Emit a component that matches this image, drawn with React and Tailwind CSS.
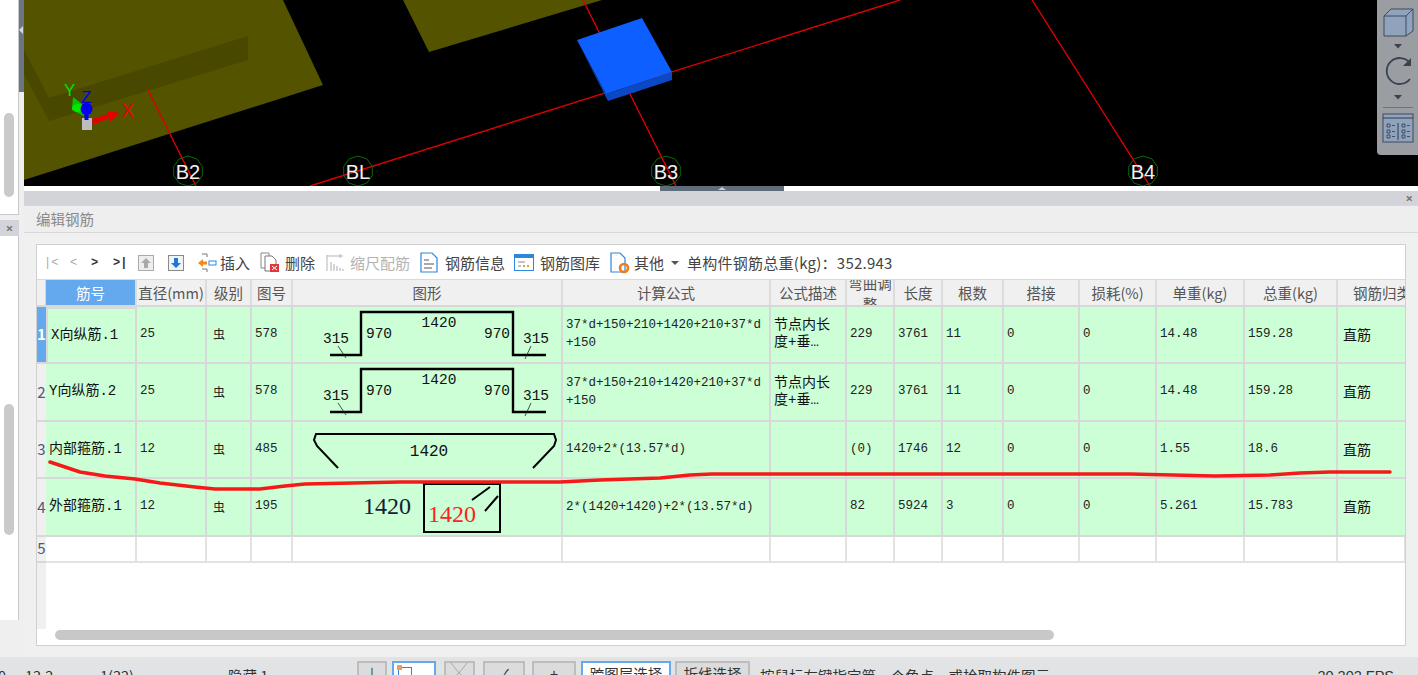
import React from 'react';

const cjk = { fontFamily: '"Noto Sans CJK SC", sans-serif' };
const GRID = 'grid grid-cols-[9px_91px_70px_45px_41px_270px_208px_76px_48px_48px_61px_76px_77px_88px_93px_68px]';

const headers = ['筋号', '直径(mm)', '级别', '图号', '图形', '计算公式', '公式描述', '弯曲调整', '长度', '根数', '搭接', '损耗(%)', '单重(kg)', '总重(kg)', '钢筋归类'];

const rows = [
  { no: 1, name: 'X向纵筋.1', d: 25, fig: 578, shape: 'hat', formula: '37*d+150+210+1420+210+37*d\n+150', desc: '节点内长\n度+垂…', bend: '229', len: 3761, count: 11, unit: '14.48', total: '159.28' },
  { no: 2, name: 'Y向纵筋.2', d: 25, fig: 578, shape: 'hat', formula: '37*d+150+210+1420+210+37*d\n+150', desc: '节点内长\n度+垂…', bend: '229', len: 3761, count: 11, unit: '14.48', total: '159.28' },
  { no: 3, name: '内部箍筋.1', d: 12, fig: 485, shape: 'tie', formula: '1420+2*(13.57*d)', desc: '', bend: '(0)', len: 1746, count: 12, unit: '1.55', total: '18.6' },
  { no: 4, name: '外部箍筋.1', d: 12, fig: 195, shape: 'stirrup', formula: '2*(1420+1420)+2*(13.57*d)', desc: '', bend: '82', len: 5924, count: 3, unit: '5.261', total: '15.783' },
];

const Axis = ({ x, label }) => {
  const pts = Array.from({ length: 10 }, (_, i) => {
    const a = (i / 10) * Math.PI * 2;
    return `${x + 15 * Math.sin(a)},${171 + 15 * Math.cos(a)}`;
  }).join(' ');
  return (
    <g>
      <polygon points={pts} fill="none" stroke="#0b6b0b" strokeWidth="1" />
      <text x={x} y="178.5" textAnchor="middle" fill="#f2f2f2" fontSize="20" fontFamily="Liberation Sans, sans-serif">{label}</text>
    </g>
  );
};

const Viewport = () => (
  <svg className="block h-[186px] w-full" viewBox="24 0 1394 186">
    <rect x="24" y="0" width="1394" height="186" fill="#000" />
    <polygon points="24,0 283,0 323,85 24,180" fill="#535300" />
    <polygon points="403,0 602,0 429,52" fill="#535300" />
    <polygon points="24,50 49,98 248,36 248,60 49,121 24,74" fill="#484800" />
    <line x1="148" y1="90" x2="196" y2="186" stroke="#e00000" strokeWidth="1.4" />
    <line x1="310" y1="186" x2="900" y2="0" stroke="#e00000" strokeWidth="1.4" />
    <line x1="583" y1="0" x2="676" y2="186" stroke="#e00000" strokeWidth="1.4" />
    <line x1="1032" y1="0" x2="1150" y2="186" stroke="#e00000" strokeWidth="1.4" />
    <polygon points="577,40 642,18 672,72 606,94" fill="#0d5fff" />
    <polygon points="577,40 606,94 672,72 672,80 608,101" fill="#0a48c4" />
    <Axis x={188} label="B2" />
    <Axis x={358} label="BL" />
    <Axis x={666} label="B3" />
    <Axis x={1143} label="B4" />
    {/* axis gizmo */}
    <rect x="82" y="118" width="10" height="12" fill="#bdbdbd" />
    <polygon points="92,119 108,114 107,111 120,113 110,122 109,118 93,125" fill="#e80000" />
    <polygon points="73,97 82,104 84,116 72,110" fill="#00c800" />
    <ellipse cx="78" cy="108" rx="6" ry="4" fill="#00e800" />
    <rect x="84.5" y="106" width="4" height="14" fill="#0000f0" />
    <circle cx="86.5" cy="109" r="6" fill="#0000f0" />
    <text x="64" y="96" fill="#00e000" fontSize="17" fontFamily="Liberation Sans, sans-serif">Y</text>
    <text x="81" y="103" fill="#0000f0" fontSize="17" fontFamily="Liberation Sans, sans-serif">Z</text>
    <text x="122" y="117" fill="#f00000" fontSize="18" fontFamily="Liberation Sans, sans-serif">X</text>
  </svg>
);

const ViewTools = () => (
  <div className="absolute right-0 top-0 flex h-[155px] w-[41px] flex-col items-center rounded-bl-sm bg-[#9a9da2]">
    <svg width="32" height="32" viewBox="0 0 32 32" className="mt-[7px]">
      <path d="M2 9 L9 2 H31 V24 L24 29 H2 Z" fill="#8fa3bd" stroke="#3f4a5c" strokeWidth="1" />
      <path d="M2 9 H24 V29 M24 9 L31 2" fill="none" stroke="#3f4a5c" strokeWidth="1" />
    </svg>
    <svg width="10" height="5" viewBox="0 0 10 5" className="mt-[5px]"><path d="M1 0 H9 L5 4.5 Z" fill="#39424f" /></svg>
    <svg width="32" height="32" viewBox="0 0 32 32" className="mt-[6px]">
      <path d="M28 8 A13 13 0 1 0 28 24" fill="none" stroke="#39424f" strokeWidth="1.8" />
      <path d="M29 3 V11 H21 Z" fill="#39424f" />
    </svg>
    <svg width="10" height="5" viewBox="0 0 10 5" className="mt-[8px]"><path d="M1 0 H9 L5 4.5 Z" fill="#39424f" /></svg>
    <div className="mt-[7px] h-px w-[30px] bg-[#6d7278]" />
    <svg width="32" height="30" viewBox="0 0 32 30" className="mt-[5px]">
      <rect x="1" y="1" width="30" height="28" fill="#8fa3bd" stroke="#3f4a5c" />
      <path d="M1 5 H31 M16 10 V27" stroke="#2f3a4c" strokeWidth="1" />
      <path d="M5 11 h3 v3 h-3 z M5 17 h3 v3 h-3 z M5 22 h3 v3 h-3 z M20 11 h3 v3 h-3 z M20 17 h3 v3 h-3 z M20 22 h3 v3 h-3 z M10 12.5 h3 M10 18.5 h3 M10 23.5 h3 M25 12.5 h3 M25 18.5 h3 M25 23.5 h3" fill="none" stroke="#2f3a4c" strokeWidth="0.8" />
    </svg>
  </div>
);

const ToolText = ({ children, muted, className = '' }) => (
  <span className={`text-[15px] leading-none ${muted ? 'text-[#b4b4b4]' : 'text-[#444]'} ${className}`}>{children}</span>
);

const Toolbar = () => (
  <div className="flex h-[35px] items-center border-b border-[#d9d9d9] pl-[7px] pt-[1px]" style={cjk}>
    <span className="w-[26px] font-mono text-[12px] text-[#aaa]">|&lt;</span>
    <span className="w-[21px] font-mono text-[12px] text-[#aaa]">&lt;</span>
    <span className="w-[22px] font-mono text-[12px] font-semibold text-[#333]">&gt;</span>
    <span className="w-[25px] font-mono text-[12px] font-semibold text-[#333]">&gt;|</span>
    <svg width="16" height="18" viewBox="0 0 16 18" className="mr-[14px]">
      <rect x="0.5" y="1.5" width="15" height="15" fill="#eee" stroke="#aaa" />
      <path d="M8 4 L13 9 H10 V14 H6 V9 H3 Z" fill="#a9a9a9" />
    </svg>
    <svg width="16" height="18" viewBox="0 0 16 18" className="mr-[13px]">
      <rect x="0.5" y="1.5" width="15" height="15" fill="#eef3fa" stroke="#8a8a8a" />
      <path d="M8 14 L13 9 H10 V4 H6 V9 H3 Z" fill="#1f78d8" />
    </svg>
    <svg width="20" height="20" viewBox="0 0 20 20" className="mr-[3px]">
      <path d="M5 1 H10 V4 M5 16 H10 V19" fill="none" stroke="#777" />
      <path d="M1 10 L6 6 V8.5 H10 V11.5 H6 V14 Z" fill="#f08a1d" />
      <rect x="12" y="8" width="7" height="4" fill="#fff" stroke="#2f86de" />
    </svg>
    <ToolText className="mr-[10px]">插入</ToolText>
    <svg width="20" height="21" viewBox="0 0 20 21" className="mr-[5px]">
      <path d="M1 1 H9 V16 H1 Z" fill="#fff" stroke="#888" />
      <path d="M5 4 H12 L16 8 V19 H5 Z" fill="#fff" stroke="#777" />
      <rect x="10" y="12" width="9" height="8" fill="#e0353a" />
      <path d="M12 14 L17 18 M17 14 L12 18" stroke="#fff" />
    </svg>
    <ToolText className="mr-[11px]">删除</ToolText>
    <svg width="18" height="20" viewBox="0 0 18 20" className="mr-[6px]">
      <path d="M1 2 V18 M1 3 H17 M14 1 V5" fill="none" stroke="#b5b5b5" />
      <path d="M5 18 V9 M8 18 V11 M11 18 V13 M14 18 V15 M17 18 V16" stroke="#bbb" strokeWidth="1.2" />
    </svg>
    <ToolText muted className="mr-[10px]">缩尺配筋</ToolText>
    <svg width="18" height="21" viewBox="0 0 18 21" className="mr-[7px]">
      <path d="M1 1 H12 L17 6 V20 H1 Z" fill="#fff" stroke="#2f86de" strokeWidth="1.2" />
      <path d="M4 8 H9 M4 12 H14 M4 16 H12" stroke="#555" />
    </svg>
    <ToolText className="mr-[9px]">钢筋信息</ToolText>
    <svg width="20" height="17" viewBox="0 0 20 17" className="mr-[6px]">
      <rect x="0.5" y="0.5" width="19" height="16" fill="#fff" stroke="#2f86de" />
      <rect x="0.5" y="0.5" width="19" height="3.5" fill="#2f86de" />
      <path d="M4 8 H11 M4 12 H7" stroke="#888" />
      <path d="M9 12 h2 M13 12 h2" stroke="#e0a020" strokeWidth="2" />
    </svg>
    <ToolText className="mr-[10px]">钢筋图库</ToolText>
    <svg width="20" height="22" viewBox="0 0 20 22" className="mr-[4px]">
      <path d="M1 1 H10 L15 6 V20 H1 Z" fill="#fff" stroke="#2f86de" strokeWidth="1.2" />
      <circle cx="14" cy="16" r="4" fill="none" stroke="#f07a14" strokeWidth="2.6" />
    </svg>
    <ToolText>其他</ToolText>
    <svg width="8" height="4" viewBox="0 0 8 4" className="ml-[7px] mr-[8px]"><path d="M0 0 H8 L4 4 Z" fill="#555" /></svg>
    <ToolText className="tracking-[0.25px]">单构件钢筋总重(kg)：352.943</ToolText>
  </div>
);

const labelProps = { fill: '#111', fontFamily: 'Liberation Mono, monospace', textAnchor: 'middle' };

const HatShape = () => (
  <svg width="270" height="55" className="-ml-px block shrink-0">
    <polyline points="38,48 69,48 69,5 221,5 221,48 254,48" fill="none" stroke="#000" strokeWidth="2.4" />
    <path d="M46 39 L54 51 M239 39 L233 52" stroke="#222" strokeWidth="0.8" />
    <text x="44" y="36" fontSize="14.5" {...labelProps}>315</text>
    <text x="87" y="31" fontSize="14.5" {...labelProps}>970</text>
    <text x="147" y="20" fontSize="14.5" {...labelProps}>1420</text>
    <text x="205" y="31" fontSize="14.5" {...labelProps}>970</text>
    <text x="244" y="36" fontSize="14.5" {...labelProps}>315</text>
  </svg>
);

const TieShape = () => (
  <svg width="270" height="55" className="-ml-px block shrink-0">
    <path d="M46 46 L25 24 L22 18 L24 12 H262 L264 18 L262 24 L241 46" fill="none" stroke="#000" strokeWidth="2" />
    <text x="137" y="34" fontSize="16" {...labelProps}>1420</text>
  </svg>
);

const StirrupShape = () => (
  <svg width="270" height="55" className="-ml-px block shrink-0">
    <rect x="132" y="5" width="76" height="48" fill="none" stroke="#000" strokeWidth="2" />
    <path d="M180 21 L198 8 M193 32 L206 17" stroke="#000" strokeWidth="2" />
    <text x="95" y="35" fontSize="24" fill="#123" textAnchor="middle" fontFamily="Liberation Serif, serif">1420</text>
    <text x="160" y="43" fontSize="24" fill="#f22" textAnchor="middle" fontFamily="Liberation Serif, serif">1420</text>
  </svg>
);

const shapes = { hat: HatShape, tie: TieShape, stirrup: StirrupShape };

const cellBase = 'flex items-center overflow-hidden border-b-2 border-r-2 border-[#d8d8d8] bg-[#ccffd6]';
const cell = `${cellBase} pl-[3px]`;
const mono = { fontFamily: '"Liberation Mono", "Noto Sans CJK SC", monospace' };

const Row = ({ row }) => {
  const Shape = shapes[row.shape];
  const first = row.no === 1;
  const plain = [row.len, row.count, 0, 0, row.unit, row.total];
  return (
    <div className={`${GRID} h-[57.5px] text-[12.5px] text-[#222]`} style={mono}>
      <div className={`flex items-center justify-center border-b-2 border-[#d8d8d8] text-[15px] ${first ? 'bg-[#64a8ee] font-bold text-white' : 'bg-[#f0f0f0] text-[#4a5a78]'}`} style={cjk}>{row.no}</div>
      <div className={`${cell} text-[14px] text-[#111] ${first ? 'border-2 border-[#6aaaf0]' : ''}`}>{row.name}</div>
      <div className={cell}>{row.d}</div>
      <div className={`${cellBase} pl-[6px] text-[12px]`} style={cjk}>虫</div>
      <div className={cell}>{row.fig}</div>
      <div className={cellBase}><Shape /></div>
      <div className={`${cell} whitespace-pre leading-[18px]`}>{row.formula}</div>
      <div className={`${cell} whitespace-pre text-[14px] leading-[17px] text-[#111]`}>{row.desc}</div>
      <div className={cell}>{row.bend}</div>
      {plain.map((v, i) => (
        <div key={i} className={cell}>{v}</div>
      ))}
      <div className="flex items-center border-b-2 border-[#d8d8d8] bg-[#ccffd6] pl-[5px] text-[14px] text-[#111]" style={cjk}>直筋</div>
    </div>
  );
};

const HeaderCell = ({ label, index }) => {
  if (label === '弯曲调整') {
    // wraps in the narrow column and gets clipped top and bottom
    return (
      <div className="overflow-hidden border-r-2 border-[#dcdcdc] text-center">
        <div className="-mt-[8px] leading-[21px]">{label}</div>
      </div>
    );
  }
  if (index === 14) {
    return <div className="overflow-hidden whitespace-nowrap pl-[15px] pt-[3px]">{label}</div>;
  }
  return (
    <div className={`overflow-hidden whitespace-nowrap border-r-2 border-[#dcdcdc] pt-[3px] text-center ${index === 0 ? 'bg-[#64a8ee] text-white' : ''}`}>
      {label}
    </div>
  );
};

const RebarTable = () => (
  <div>
    <div className={`${GRID} h-[26.5px] border-b-2 border-[#d8d8d8] bg-[#f0f0f0] text-[14.5px] leading-[20px] text-[#555]`} style={cjk}>
      <div className="border-r border-[#d8d8d8]" />
      {headers.map((h, i) => <HeaderCell key={h} label={h} index={i} />)}
    </div>
    {rows.map((row) => <Row key={row.no} row={row} />)}
    <div className={`${GRID} h-[26px] text-[15px]`}>
      <div className="flex items-center justify-center border-b-2 border-[#d8d8d8] bg-[#f0f0f0] text-[#4a5a78]" style={cjk}>5</div>
      {headers.map((h) => <div key={h} className="border-b-2 border-r-2 border-[#e2e2e2]" />)}
    </div>
  </div>
);

const Sidebar = () => (
  <div className="relative flex w-[24px] shrink-0 flex-col bg-[#efefef]">
    {/* collapse strip next to the viewport */}
    <div className="absolute right-0 top-0 flex h-[92px] w-[5px] items-start bg-[#6b7585] pt-[26px]">
      <span className="h-0 w-0 border-y-[4px] border-r-[4px] border-y-transparent border-r-[#d5d8dc]" />
    </div>
    <div className="flex h-[215px] w-[19px] justify-center border-b border-r border-[#c8c8c8] bg-white pt-[113px]">
      <div className="h-[84px] w-[10px] rounded-md bg-[#cacaca]" />
    </div>
    <div className="mt-[5px] flex h-[16px] w-[19px] items-center justify-center bg-[#d2d4d9] text-[13px] font-bold leading-none text-[#777]">×</div>
    <div className="flex h-[384px] w-[19px] justify-center border-r border-[#c8c8c8] bg-white pt-[168px]">
      <div className="h-[131px] w-[10px] rounded-md bg-[#cacaca]" />
    </div>
  </div>
);

const StatusButton = ({ children, active, className = '' }) => (
  <div className={`mt-[4px] h-[24px] shrink-0 border-2 text-center text-[14.5px] leading-[22px] text-[#333] ${active ? 'border-[#64a8ee] bg-white' : 'border-[#bdbdbd] bg-[#dcdcdc]'} ${className}`}>{children}</div>
);

const StatusBar = () => (
  <div className="flex h-[18px] shrink-0 items-start overflow-hidden bg-[#e2e3e5] text-[14.5px] text-[#333]" style={cjk}>
    <span className="ml-[-2px] mt-[9px] w-[27px] leading-[20px]">0</span>
    <span className="mt-[9px] w-[75px] leading-[20px]">13.2</span>
    <span className="mt-[9px] w-[128px] leading-[20px]">1(32)</span>
    <span className="mt-[9px] w-[129px] leading-[20px]">隐藏 1</span>
    <StatusButton className="w-[30px]">|</StatusButton>
    <StatusButton active className="relative ml-[5px] w-[44px]">
      <span className="absolute left-[4px] top-[4px] block h-[10px] w-[14px] border border-[#2f86de] bg-white" />
      <span className="absolute left-[3px] top-[2px] block h-[5px] w-[5px] bg-[#f59a4a]" />
    </StatusButton>
    <StatusButton className="ml-[8px] w-[31px]">
      <svg width="27" height="14" viewBox="0 0 27 14" className="block"><path d="M5 0 L13 10 L21 0 M13 10 L8 14 M13 10 L18 14" fill="none" stroke="#a8a8a8" /></svg>
    </StatusButton>
    <StatusButton className="ml-[8px] w-[42px]">✓</StatusButton>
    <StatusButton className="ml-[7px] w-[44px]">+</StatusButton>
    <StatusButton active className="ml-[5px] w-[90px]">跨图层选择</StatusButton>
    <StatusButton className="ml-[4px] w-[75px]">折线选择</StatusButton>
    <span className="ml-[10px] mt-[9px] leading-[20px]">按鼠标左键指定第一个角点，或拾取构件图元</span>
    <span className="ml-auto mr-[24px] mt-[9px] leading-[20px]" style={{ fontFamily: 'Liberation Sans, sans-serif' }}>20.202 FPS</span>
  </div>
);

export default function App() {
  return (
    <div className="relative flex h-[675px] w-[1418px] flex-col overflow-hidden bg-[#f0f0f0]">
      <div className="flex h-[657px] shrink-0">
        <Sidebar />
        <div className="flex min-w-0 flex-1 flex-col">
          <div className="relative">
            <Viewport />
            <ViewTools />
          </div>
          {/* splitter */}
          <div className="relative h-[5px] bg-white">
            <div className="absolute left-[636px] top-0 flex h-[5px] w-[124px] justify-center bg-[#616c7a]">
              <span className="mt-[1px] h-0 w-0 border-x-[4px] border-b-[3px] border-x-transparent border-b-[#c8ccd2]" />
            </div>
          </div>
          <div className="flex h-[14px] items-center justify-end bg-[#d2d4d9] pr-[5px] text-[13px] font-bold leading-none text-[#777]">×</div>
          <div className="flex h-[28px] items-center border-y border-[#d8d8d8] bg-[#eeeeee] pl-[12px] text-[14.5px] text-[#8a8a8a]" style={cjk}>编辑钢筋</div>
          <div className="flex-1 px-[12px] pb-[11px] pt-[11px]">
            <div className="relative h-[402px] overflow-hidden border border-[#d0d0d0] bg-white">
              <Toolbar />
              <RebarTable />
              <div className="absolute bottom-[16px] left-0 top-[318px] w-[9px] bg-[#f0f0f0]" />
              <div className="absolute bottom-[5px] left-[18px] h-[10px] w-[999px] rounded-md bg-[#c8c8c8]" />
            </div>
          </div>
        </div>
      </div>
      <StatusBar />
      {/* hand drawn red mark over the table */}
      <svg className="pointer-events-none absolute left-0 top-0" width="1418" height="675">
        <polyline points="50,462 65,467 80,472 105,476 135,479 160,483 195,487 215,489 260,489 285,486 305,484 400,482 560,482 600,480 660,478 690,475 712,474 1000,474 1130,474 1215,476 1270,475 1300,473 1330,472 1390,472" fill="none" stroke="#f51a1a" strokeWidth="3.5" strokeLinecap="round" strokeLinejoin="round" />
      </svg>
    </div>
  );
}
